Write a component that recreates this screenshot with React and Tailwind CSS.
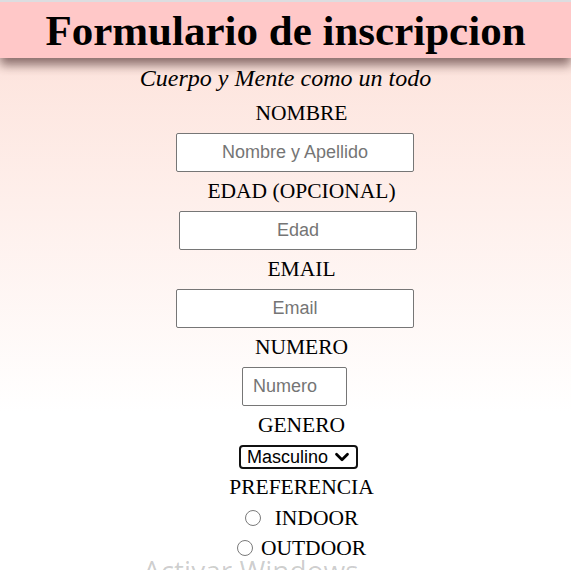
import { ChevronDown } from 'lucide-react';

const serif = { fontFamily: '"Liberation Serif", "Times New Roman", serif' };

function Label({ children, className = '' }) {
  return (
    <label className={`block h-[39px] leading-[39px] text-[21.5px] text-black ${className}`}>
      {children}
    </label>
  );
}

function Field({ placeholder, className = '' }) {
  return (
    <input
      type="text"
      placeholder={placeholder}
      className={`h-[39px] bg-white border border-[#767676] rounded-[2px] text-[18px] text-black placeholder:text-[#757575] font-['Liberation_Sans',Arial,sans-serif] outline-none ${className}`}
    />
  );
}

function Radio({ name, value, label, gap }) {
  return (
    <label className={`flex items-center h-[30px] ${gap}`}>
      <input
        type="radio"
        name={name}
        value={value}
        className="appearance-none shrink-0 w-[16px] h-[16px] rounded-full border border-[#7a7a7a] bg-white m-0"
      />
      <span className="text-[21.5px] leading-[30px]">{label}</span>
    </label>
  );
}

export default function App() {
  return (
    <div
      className="relative min-h-[570px] overflow-hidden border-t-2 border-[#dcdde0] bg-[linear-gradient(to_bottom,#fde0d8_0px,#ffffff_410px)]"
      style={serif}
    >
      {/* Header */}
      <header className="h-[56px] bg-[#ffc8c8] shadow-[0_7px_10px_rgba(60,30,30,0.6)] flex items-center justify-center">
        <h1 className="text-[43px] font-bold leading-none text-black">Formulario de inscripcion</h1>
      </header>

      <p className="mt-[6px] h-[30px] leading-[28px] text-center italic text-[24px] text-black">
        Cuerpo y Mente como un todo
      </p>

      {/* Form */}
      <form className="pl-8 flex flex-col items-center">
        <Label>NOMBRE</Label>
        <Field placeholder="Nombre y Apellido" className="w-[238px] mr-[13px] text-center" />

        <Label>EDAD (OPCIONAL)</Label>
        <Field placeholder="Edad" className="w-[238px] mr-[7px] text-center" />

        <Label>EMAIL</Label>
        <Field placeholder="Email" className="w-[238px] mr-[13px] text-center" />

        <Label>NUMERO</Label>
        <Field placeholder="Numero" className="w-[105px] mr-[14px] pl-[10px] text-left" />

        <Label>GENERO</Label>
        <div className="relative mr-[6px] w-[119px] h-[24px]">
          <select className="appearance-none w-full h-full border-[2.5px] border-[#111] rounded-[4px] bg-white pl-[6px] text-[18px] leading-none text-black font-['Liberation_Sans',Arial,sans-serif] outline-none">
            <option>Masculino</option>
            <option>Femenino</option>
            <option>Otro</option>
          </select>
          <ChevronDown
            className="absolute right-[5px] top-[1px] w-[22px] h-[22px] text-black pointer-events-none"
            strokeWidth={3}
          />
        </div>

        <div className="mt-[3px] h-[31px] leading-[31px] text-[21.5px]">PREFERENCIA</div>

        <Radio name="pref" value="indoor" label="INDOOR" gap="gap-[14px]" />
        <Radio name="pref" value="outdoor" label="OUTDOOR" gap="gap-[8px]" />
      </form>

      {/* Windows activation watermark */}
      <div className="absolute left-[143px] top-[558px] text-[28px] leading-[20px] text-black/20 font-['Open_Sans',sans-serif] pointer-events-none whitespace-nowrap">
        Activar Windows
      </div>
    </div>
  );
}
